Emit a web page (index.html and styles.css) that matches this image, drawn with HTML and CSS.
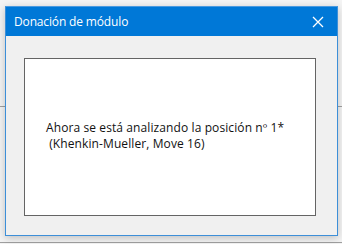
FILE: index.html
```html
<!DOCTYPE html>
<html lang="es">
<head>
<meta charset="utf-8">
<link rel="stylesheet" href="styles.css">
</head>
<body>
<div class="dialog">
  <div class="titlebar">
    <span class="title">Donación de módulo</span>
    <svg class="close" width="12" height="12" viewBox="0 0 12 12"><path d="M1 1 L11 11 M11 1 L1 11" stroke="#fff" stroke-width="1.3" fill="none"/></svg>
  </div>
  <div class="content">
    <div class="box">
      <div class="msg">Ahora se está analizando la posición nº 1*<br>&nbsp;(Khenkin-Mueller, Move 16)</div>
    </div>
  </div>
</div>
</body>
</html>
```
FILE: styles.css
```css
html, body {
  margin: 0;
  padding: 0;
}
body {
  width: 342px;
  height: 244px;
  overflow: hidden;
  background:
    linear-gradient(#a0a0a0, #a0a0a0) 0 106px / 100% 1px no-repeat,
    linear-gradient(#a0a0a0, #a0a0a0) 0 242px / 100% 1px no-repeat,
    #f4f4f4;
  font-family: "Open Sans", "Noto Sans", sans-serif;
  padding: 6px 0 0 5px;
  box-sizing: border-box;
}
.dialog {
  width: 333px;
  height: 230px;
  box-sizing: border-box;
  border: 1px solid #3d8fd8;
  border-top-color: #4a9ae0;
  background: #f0f0f0;
  box-shadow: 0 2px 8px rgba(0,0,0,0.22);
  display: flex;
  flex-direction: column;
}
.titlebar {
  height: 29px;
  background: #0078d7;
  display: flex;
  align-items: center;
  justify-content: space-between;
  padding: 0 13px 0 8px;
  flex-shrink: 0;
}
.title {
  color: #fff;
  font-size: 12px;
  letter-spacing: -0.15px;
  margin-top: -1px;
}
.close {
  display: block;
}
.content {
  flex: 1;
  padding: 21px 0 0 18px;
  border-top: 1px solid #f0f0f0;
  background: #f0f0f0;
}
.box {
  width: 292px;
  height: 158px;
  box-sizing: border-box;
  border: 1px solid #646464;
  background: #fff;
  display: flex;
  align-items: center;
  padding: 0 0 0 21px;
}
.msg {
  font-size: 12px;
  line-height: 16px;
  letter-spacing: 0.1px;
  color: #111;
  margin-top: -3px;
}
```
